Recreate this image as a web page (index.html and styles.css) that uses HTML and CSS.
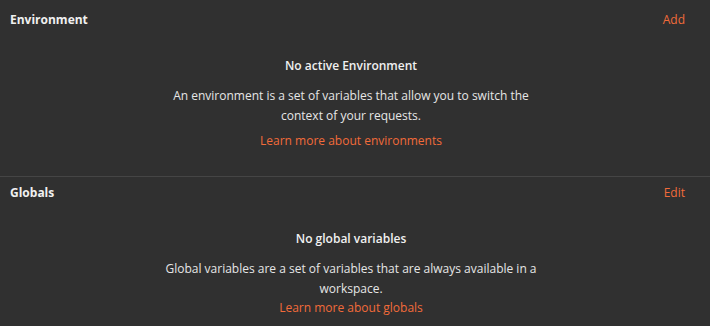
FILE: index.html
```html
<!DOCTYPE html>
<html lang="en">
  <head>
    <meta charset="UTF-8" />
    <title>Environments</title>
    <link rel="stylesheet" href="styles.css">
  </head>
  <body>
    <div class="env-panel">
      <section class="env-section env-section-first">
        <div class="env-header">
          <span class="env-title">Environment</span>
          <a class="env-action" href="#">Add</a>
        </div>
        <div class="empty-state">
          <h4 class="empty-title">No active Environment</h4>
          <p class="empty-text">An environment is a set of variables that allow you to switch the context of your requests.</p>
          <a class="empty-link env-link" href="#">Learn more about environments</a>
        </div>
      </section>

      <section class="env-section">
        <div class="env-header">
          <span class="env-title">Globals</span>
          <a class="env-action" href="#">Edit</a>
        </div>
        <div class="empty-state">
          <h4 class="empty-title">No global variables</h4>
          <p class="empty-text">Global variables are a set of variables that are always available in a workspace.</p>
          <a class="empty-link" href="#">Learn more about globals</a>
        </div>
      </section>
    </div>
  </body>
</html>
```

FILE: styles.css
```css
body {
  margin: 0;
  background: #303030;
  font-family: "Open Sans", "Noto Sans", sans-serif;
  font-size: 12px;
  color: #e6e6e6;
}

.env-panel {
  padding-top: 4px;
}

.env-section-first {
  padding-bottom: 27px;
  border-bottom: 1px solid #454545;
}

.env-header {
  display: flex;
  justify-content: space-between;
  align-items: center;
  padding: 8px 25px 8px 10px;
  line-height: 16px;
}

.env-title {
  font-weight: 700;
  color: #f0f0f0;
}

.env-action {
  color: #f26b3a;
  text-decoration: none;
}

.empty-state {
  display: flex;
  flex-direction: column;
  align-items: center;
  text-align: center;
  padding-right: 8px;
}

.empty-title {
  margin: 22px 0 0;
  font-size: 12px;
  line-height: 16px;
  font-weight: 600;
  color: #f0f0f0;
}

.empty-text {
  max-width: 385px;
  margin: 12px 0 0;
  line-height: 20px;
  color: #e6e6e6;
}

.empty-link {
  margin-top: 1px;
  line-height: 16px;
  color: #f26b3a;
  text-decoration: none;
}

.env-link {
  margin-top: 7px;
}
```
